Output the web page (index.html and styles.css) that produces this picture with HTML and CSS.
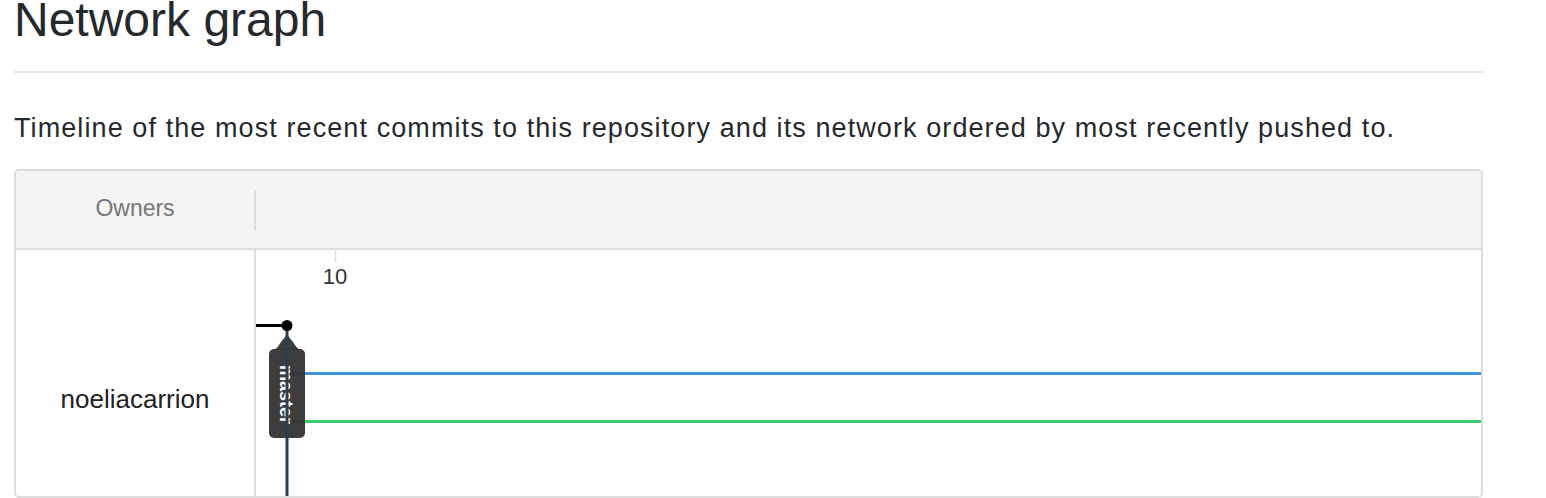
FILE: index.html
```html
<!DOCTYPE html>
<html>
<head>
<meta charset="utf-8">
<link rel="stylesheet" href="styles.css">
</head>
<body>
<div class="page">
  <h1 class="title">Network graph</h1>
  <p class="lead">Timeline of the most recent commits to this repository and its network ordered by most recently pushed to.</p>
  <div class="network">
    <div class="net-head">
      <div class="owners-head">Owners</div>
      <div class="graph-head"></div>
    </div>
    <div class="net-body">
      <div class="owner-cell">noeliacarrion</div>
      <div class="graph-cell">
        <svg class="graph" width="1225" height="246" viewBox="0 0 1225 246" xmlns="http://www.w3.org/2000/svg">
          <line x1="79.5" y1="0" x2="79.5" y2="12" stroke="#dddddd" stroke-width="1.5"/>
          <text x="79" y="34" text-anchor="middle" class="tick-label">10</text>
          <line x1="0" y1="75.5" x2="31" y2="75.5" stroke="#000" stroke-width="3"/>
          <line x1="34" y1="123.5" x2="1225" y2="123.5" stroke="#3a98d8" stroke-width="3"/>
          <line x1="34" y1="171.5" x2="1225" y2="171.5" stroke="#3dc872" stroke-width="3"/>
          <path d="M31 80 C31 86 28 88 25 92 C22 96 22 98 17 100 L45 100 C40 98 40 96 37 92 C34 88 31 86 31 80 Z" fill="#333333" opacity="0.95"/>
          <rect x="13" y="99" width="36" height="89" rx="5" fill="#333333" opacity="0.95"/>
          <text transform="translate(23.5,115) rotate(90)" class="branch-label">master</text>
          <line x1="31" y1="75" x2="31" y2="246" stroke="#2c3e50" stroke-width="3"/>
          <circle cx="31" cy="75.5" r="5.5" fill="#000"/>
        </svg>
      </div>
    </div>
  </div>
</div>
</body>
</html>
```

FILE: styles.css
```css
html, body {
  margin: 0;
  padding: 0;
  background: #ffffff;
}

body {
  font-family: "Liberation Sans", Arial, sans-serif;
  color: #24292e;
  overflow: hidden;
}

.page {
  margin-left: 14px;
  width: 1470px;
}

.title {
  margin: 0;
  font-size: 48px;
  font-weight: normal;
  line-height: 40px;
  padding-bottom: 31px;
  border-bottom: 2px solid #e4e6e9;
}

.lead {
  margin: 40px 0 26px;
  font-size: 27px;
  letter-spacing: 1.09px;
  line-height: 30px;
  white-space: nowrap;
}

.network {
  width: 1469px;
  box-sizing: border-box;
  border: 2px solid #dcdcdc;
  border-radius: 5px;
  overflow: hidden;
}

.net-head {
  display: flex;
  height: 77px;
  background: #f5f5f5;
  border-bottom: 2px solid #dcdcdc;
}

.owners-head {
  width: 240px;
  margin: 19px 0 18px;
  padding-bottom: 4px;
  box-sizing: border-box;
  border-right: 2px solid #dcdcdc;
  display: flex;
  align-items: center;
  justify-content: center;
  color: #767676;
  font-size: 23px;
}

.graph-head {
  flex: 1;
}

.net-body {
  display: flex;
  height: 246px;
}

.owner-cell {
  width: 238px;
  border-right: 2px solid #dcdcdc;
  box-sizing: content-box;
  padding-top: 134px;
  text-align: center;
  font-size: 26px;
  line-height: 30px;
  color: #222;
}

.graph-cell {
  flex: 1;
}

.graph {
  display: block;
}

.tick-label {
  font-family: "Liberation Sans", Arial, sans-serif;
  font-size: 22px;
  fill: #333333;
}

.branch-label {
  font-family: "Liberation Sans", Arial, sans-serif;
  font-size: 18px;
  font-weight: bold;
  fill: #ffffff;
}
```
